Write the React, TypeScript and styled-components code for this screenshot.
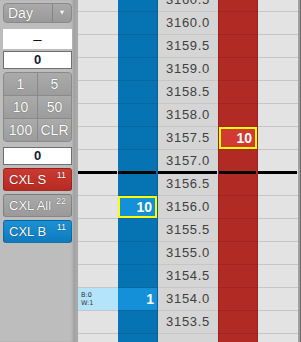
import styled, { createGlobalStyle } from "styled-components";

const GlobalStyle = createGlobalStyle`
  html, body {
    margin: 0;
    padding: 0;
    background: #bcbcbc;
    font-family: "Liberation Sans", Arial, sans-serif;
  }
`;

type Level = {
  price: string;
  bid?: string;
  ask?: string;
  bidHot?: boolean;
  askHot?: boolean;
  bidFill?: boolean;
  note?: string[];
  split?: boolean;
};

const levels: Level[] = [
  { price: "3160.5" },
  { price: "3160.0" },
  { price: "3159.5" },
  { price: "3159.0" },
  { price: "3158.5" },
  { price: "3158.0" },
  { price: "3157.5", ask: "10", askHot: true },
  { price: "3157.0", split: true },
  { price: "3156.5" },
  { price: "3156.0", bid: "10", bidHot: true },
  { price: "3155.5" },
  { price: "3155.0" },
  { price: "3154.5" },
  { price: "3154.0", bid: "1", bidFill: true, note: ["B:0", "W:1"] },
  { price: "3153.5" },
  // last row only peeks in at the bottom edge, its label is off-screen
  { price: "" },
];

function App() {
  return (
    <>
      <GlobalStyle />
      <Screen>
        <Sidebar>
          <DaySelect>
            <DayLabel>Day</DayLabel>
            <DayArrow>▼</DayArrow>
          </DaySelect>
          <DashBox>–</DashBox>
          <Field $top={2}>0</Field>
          <Keypad>
            {["1", "5", "10", "50", "100", "CLR"].map((k) => (
              <Key key={k}>{k}</Key>
            ))}
          </Keypad>
          <Field $top={5}>0</Field>
          <CancelButton $tone="red" $top={3}>
            CXL S<Badge>11</Badge>
          </CancelButton>
          <CancelButton $tone="gray" $top={3}>
            CXL All<Badge>22</Badge>
          </CancelButton>
          <CancelButton $tone="blue" $top={3}>
            CXL B<Badge>11</Badge>
          </CancelButton>
        </Sidebar>
        <Gutter />
        <Ladder>
          {levels.map((l, i) => (
            <Row key={i}>
              <SideCell $split={l.split}>
                {l.note && (
                  <Note>
                    {l.note.map((n) => (
                      <span key={n}>{n}</span>
                    ))}
                  </Note>
                )}
              </SideCell>
              <BidCell $split={l.split} $fill={l.bidFill}>
                {l.bid && <Qty $hot={l.bidHot} $tone="blue">{l.bid}</Qty>}
              </BidCell>
              <PriceCell $split={l.split}>{l.price}</PriceCell>
              <AskCell $split={l.split}>
                {l.ask && <Qty $hot={l.askHot} $tone="red">{l.ask}</Qty>}
              </AskCell>
              <PlainCell $split={l.split} />
            </Row>
          ))}
        </Ladder>
        <RightEdge />
      </Screen>
    </>
  );
}

export default App;

const Screen = styled.div`
  display: flex;
  width: 301px;
  height: 342px;
  overflow: hidden;
  background: #bcbcbc;
`;

const Sidebar = styled.div`
  width: 75px;
  flex-shrink: 0;
  box-sizing: border-box;
  padding: 3px 3px 0 3px;
  display: flex;
  flex-direction: column;
  background: #bdbdbd;
  box-shadow: inset -3px 0 3px -1px rgba(0, 0, 0, 0.18);
`;

const DaySelect = styled.div`
  height: 20px;
  box-sizing: border-box;
  width: 69px;
  display: flex;
  border: 1px solid #8a8a8a;
  border-radius: 4px;
  background: linear-gradient(#aaaaaa, #999999);
  color: #fff;
  text-shadow: 0 0 1px rgba(0, 0, 0, 0.5);
  font-size: 14px;
`;

const DayLabel = styled.div`
  flex: 1;
  padding-left: 4px;
  line-height: 18px;
  border-right: 1px solid #858585;
`;

const DayArrow = styled.div`
  width: 18px;
  text-align: center;
  font-size: 8px;
  line-height: 18px;
  color: #f4f4f4;
`;

const DashBox = styled.div`
  margin-top: 6px;
  height: 20px;
  width: 69px;
  background: #ffffff;
  text-align: center;
  font-size: 15px;
  line-height: 20px;
  color: #111;
`;

const Field = styled.div<{ $top: number }>`
  margin-top: ${(p) => p.$top}px;
  height: 18px;
  width: 69px;
  box-sizing: border-box;
  border: 1px solid #6f6f6f;
  background: #ffffff;
  text-align: center;
  font-size: 13px;
  font-weight: bold;
  line-height: 16px;
  color: #111a33;
`;

const Keypad = styled.div`
  margin-top: 3px;
  width: 69px;
  height: 70px;
  box-sizing: border-box;
  display: grid;
  grid-template-columns: 1fr 1fr;
  grid-template-rows: repeat(3, 1fr);
  gap: 1px;
  border: 1px solid #8a8a8a;
  border-radius: 4px;
  overflow: hidden;
  background: #8a8a8a;
`;

const Key = styled.div`
  display: flex;
  align-items: center;
  justify-content: center;
  background: linear-gradient(#ababab, #9c9c9c);
  color: #fff;
  font-size: 14px;
  text-shadow: 0 0 1px rgba(0, 0, 0, 0.6);
`;

const toneBg = {
  red: "linear-gradient(#cc3a30, #b72a24)",
  gray: "linear-gradient(#a9a9a9, #9a9a9a)",
  blue: "linear-gradient(#1a92d6, #0d7bbd)",
};

const CancelButton = styled.div<{ $tone: "red" | "gray" | "blue"; $top: number }>`
  position: relative;
  margin-top: ${(p) => p.$top}px;
  height: 23px;
  width: 69px;
  box-sizing: border-box;
  border: 1px solid rgba(0, 0, 0, 0.2);
  border-radius: 3px;
  background: ${(p) => toneBg[p.$tone]};
  color: #fff;
  font-size: 13px;
  line-height: 21px;
  padding-left: 5px;
  text-shadow: 0 0 1px rgba(0, 0, 0, 0.7);
`;

const Badge = styled.span`
  position: absolute;
  top: 1px;
  right: 5px;
  font-size: 9px;
  line-height: 10px;
`;

const Gutter = styled.div`
  width: 3px;
  flex-shrink: 0;
  background: #a8a8a8;
`;

const RightEdge = styled.div`
  width: 3px;
  flex-shrink: 0;
  background: #a0a0a0;
  border-right: 1px solid #6a6a6a;
  box-sizing: border-box;
`;

const Ladder = styled.div`
  width: 220px;
  flex-shrink: 0;
  display: flex;
  flex-direction: column;
  margin-top: -11px;
`;

const Row = styled.div`
  display: grid;
  grid-template-columns: 40px 40px 60px 40px 40px;
  height: 23px;
  flex-shrink: 0;
`;

const Cell = styled.div<{ $split?: boolean }>`
  position: relative;
  box-sizing: border-box;
  height: 23px;
  border-bottom: 1px solid #c6c6c6;
  &::after {
    content: "";
    display: ${(p) => (p.$split ? "block" : "none")};
    position: absolute;
    left: 0;
    right: 1px;
    bottom: -2px;
    height: 3px;
    background: #000;
    z-index: 2;
  }
`;

const SideCell = styled(Cell)`
  background: #e3e3e3;
`;

const PlainCell = styled(Cell)`
  background: #e3e3e3;
`;

const BidCell = styled(Cell)<{ $fill?: boolean }>`
  background: ${(p) => (p.$fill ? "#1490d9" : "#0673b2")};
  border-bottom-color: #0968a1;
  border-right: 1px solid #0b5f91;
`;

const AskCell = styled(Cell)`
  background: #b22a24;
  border-bottom-color: #a4241f;
  border-left: 1px solid #9a221d;
  border-right: 1px solid #9a221d;
`;

const PriceCell = styled(Cell)`
  background: #d5d5d5;
  text-align: center;
  font-size: 13px;
  letter-spacing: 0.7px;
  line-height: 22px;
  color: #404040;
`;

const Qty = styled.div<{ $hot?: boolean; $tone: "red" | "blue" }>`
  height: 100%;
  box-sizing: border-box;
  border: ${(p) => (p.$hot ? "2px solid #ffff00" : "none")};
  background: ${(p) =>
    p.$hot ? (p.$tone === "red" ? "#d03a31" : "#1490d9") : "transparent"};
  color: #fff;
  font-size: 14px;
  font-weight: bold;
  text-align: right;
  padding-right: 3px;
  line-height: ${(p) => (p.$hot ? "18px" : "22px")};
`;

const Note = styled.div`
  display: flex;
  flex-direction: column;
  height: 100%;
  box-sizing: border-box;
  padding: 3px 0 0 3px;
  background: #b4e4fb;
  font-family: "DejaVu Sans", sans-serif;
  font-size: 6.5px;
  line-height: 8px;
  color: #333;
`;
